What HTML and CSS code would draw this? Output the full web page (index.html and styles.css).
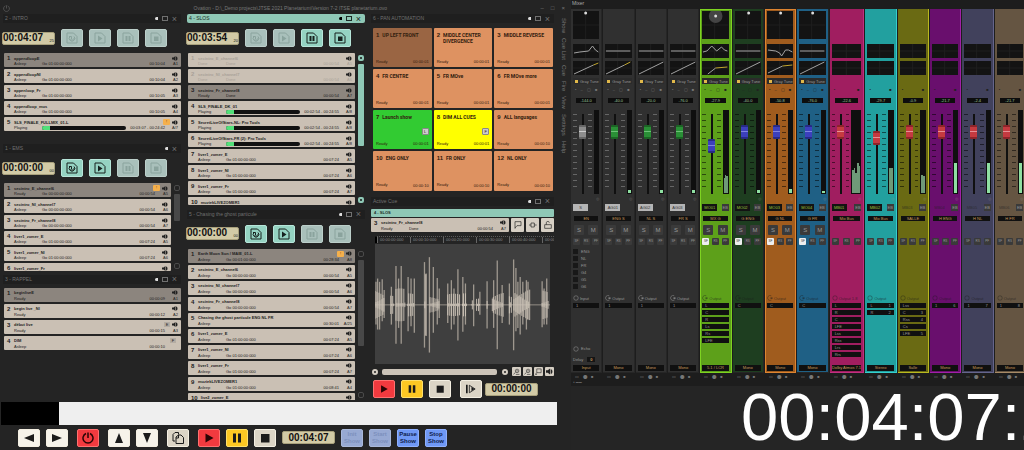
FILE: index.html
```html
<!DOCTYPE html>
<html lang="en">
<head>
    <meta charset="UTF-8">
    <meta name="viewport" content="width=device-width, initial-scale=1.0">
    <title>Ovation</title>
    <link rel="stylesheet" href="styles.css">
</head>
<body>
    <svg class="sprite" aria-hidden="true">
        <symbol id="i-speaker" viewBox="0 0 12 10"><path d="M0 3h3l4-3v10L3 7H0z"/><path d="M8 1c4 0 4 8 0 8z"/></symbol>
        <symbol id="i-doc-loop" viewBox="0 0 24 24"><path class="ln" d="M2 2h13l7 7v13H2z"/><path class="ln" d="M8 9a5.500 5.500 0 1 0 8 0M6 9h5v5M9 14l3 3 5-5"/></symbol>
        <symbol id="i-doc-play" viewBox="0 0 24 24"><path class="ln" d="M2 2h13l7 7v13H2z"/><path d="M8 7l9 6-9 6z"/></symbol>
        <symbol id="i-doc-pause" viewBox="0 0 24 24"><path class="ln" d="M2 2h13l7 7v13H2z"/><path d="M7 8h4v10H7zM13 8h4v10h-4z"/></symbol>
        <symbol id="i-doc-stop" viewBox="0 0 24 24"><path class="ln" d="M2 2h13l7 7v13H2z"/><path d="M8 9h9v9H8z"/></symbol>
        <symbol id="i-left" viewBox="0 0 24 24"><path d="M2 12l20-8v16z"/></symbol>
        <symbol id="i-right" viewBox="0 0 24 24"><path d="M22 12L2 4v16z"/></symbol>
        <symbol id="i-up" viewBox="0 0 24 24"><path d="M12 2l8 20H4z"/></symbol>
        <symbol id="i-down" viewBox="0 0 24 24"><path d="M12 22l8-20H4z"/></symbol>
        <symbol id="i-power" viewBox="0 0 24 24"><path class="ln thick" d="M8 3a10 10 0 1 0 8 0M12 1v11"/></symbol>
        <symbol id="i-copy" viewBox="0 0 24 24"><path class="ln" d="M6 18H2V5l4-4h7v4M8 23V10l5-4h5l5 5v12zM13 6v6H8"/></symbol>
        <symbol id="i-play" viewBox="0 0 24 24"><path d="M5 3l16 9-16 9z"/></symbol>
        <symbol id="i-pause" viewBox="0 0 24 24"><path d="M4 3h6v18H4zM14 3h6v18h-6z"/></symbol>
        <symbol id="i-stop" viewBox="0 0 24 24"><path d="M4 4h17v17H4z"/></symbol>
        <symbol id="i-step" viewBox="0 0 24 24"><path d="M0 2h4v20H0z"/><path class="ln" d="M8 3l14 9-14 9z"/><path d="M13 7l8 5-8 5z"/></symbol>
        <symbol id="i-flag" viewBox="0 0 24 24"><path class="ln" d="M3 23V2h18v12H9l-6 7"/></symbol>
        <symbol id="i-key" viewBox="0 0 24 24"><path class="ln" d="M0 12h6M6 6h10v12H6zM16 12h7"/></symbol>
        <symbol id="i-lock" viewBox="0 0 24 24"><path class="ln" d="M2 11h20v11H2zM7 11V5c0-5 9-5 9 0"/></symbol>
        <symbol id="i-zoom" viewBox="0 0 24 24"><path class="ln" d="M2 22l6-7M20 10a6 6 0 1 1-12 0 6 6 0 1 1 12 0zM11 10h6M10 22h12"/></symbol>
        <symbol id="i-fit" viewBox="0 0 24 24"><path class="ln" d="M6 3h15v13H6zM6 16l-5 6M1 22h6"/></symbol>
        <symbol id="i-ring" viewBox="0 0 24 24"><circle class="ln" cx="12" cy="12" r="9"/></symbol>
        <symbol id="i-knob" viewBox="0 0 24 24"><path class="ln" d="M17 3a10 10 0 1 0 1 17"/><path d="M14 10h8v5h-8z"/></symbol>
    </svg>

    <div class="ovation">
        <header class="titlebar">
            <svg class="titlebar-logo"><use href="#i-power"/></svg>
            <h1 class="titlebar-text">Ovation - D:\_Demo projects\JTSE 2021 Planetarium\Version 7-2 ITSE planetarium.ovo</h1>
            <div class="window-controls">
                <button aria-label="Minimise">–</button>
                <button aria-label="Maximise">□</button>
                <button aria-label="Close">×</button>
            </div>
        </header>

        <main class="workspace">
            <div class="column" id="left"></div>
            <div class="column" id="middle"></div>
            <div class="column column-wide">
                <section class="panel panel-pan">
                    <div class="panel-head">
                        <h2>6 - PAN AUTOMATION</h2>
                        <span class="head-icons"><i class="arrow"></i><i class="box"></i><i class="cross">×</i></span>
                    </div>
                    <div class="tiles" id="tiles"></div>
                </section>
                <section class="panel panel-active">
                    <div class="panel-head">
                        <h2>Active Cue</h2>
                        <span class="head-icons"><i class="arrow"></i><i class="box"></i><i class="cross">×</i></span>
                    </div>
                    <div class="active-list">4 - SLOS</div>
                    <div class="active-cue">
                        <div id="active-row"></div>
                        <button class="tool" aria-label="Marker"><svg><use href="#i-flag"/></svg></button>
                        <button class="tool" aria-label="Key"><svg><use href="#i-key"/></svg></button>
                        <button class="tool" aria-label="Lock"><svg><use href="#i-lock"/></svg></button>
                    </div>
                    <div class="ruler">
                        <span>00:00:00:000</span><span>00:00:10:000</span><span>00:00:20:000</span><span>00:00:30:000</span><span>00:00:40:000</span><span>00:00</span>
                    </div>
                    <svg class="wave" id="wave" viewBox="0 0 534 366" preserveAspectRatio="none"></svg>
                    <div class="wave-scroll">
                        <i class="dot"></i><i class="bar"></i><i class="dot"></i>
                        <button aria-label="Zoom out"><svg><use href="#i-zoom"/></svg></button>
                        <button aria-label="Zoom in"><svg><use href="#i-zoom"/></svg></button>
                        <button aria-label="Fit"><svg><use href="#i-fit"/></svg></button>
                        <button aria-label="Listen"><svg><use href="#i-speaker"/></svg></button>
                    </div>
                    <div class="transport">
                        <button class="btn red" aria-label="Play"><svg><use href="#i-play"/></svg></button>
                        <button class="btn yellow" aria-label="Pause"><svg><use href="#i-pause"/></svg></button>
                        <button class="btn beige" aria-label="Stop"><svg><use href="#i-stop"/></svg></button>
                        <button class="btn beige step" aria-label="Step"><svg><use href="#i-step"/></svg></button>
                        <div class="clock centered">00:00:00</div>
                    </div>
                </section>
            </div>
            <nav class="side-menu">
                <a href="#">Show</a><a href="#">Cue List</a><a href="#">Cue</a><a href="#">Fire</a><a href="#">View</a><a href="#">Settings</a><a href="#">Help</a>
            </nav>
        </main>

        <div class="show-progress"><div class="done"></div></div>

        <footer class="show-bar">
            <button class="btn white" aria-label="Previous"><svg><use href="#i-left"/></svg></button>
            <button class="btn white" aria-label="Next"><svg><use href="#i-right"/></svg></button>
            <button class="btn red apart" aria-label="Power"><svg><use href="#i-power"/></svg></button>
            <button class="btn white apart" aria-label="Up"><svg><use href="#i-up"/></svg></button>
            <button class="btn white" aria-label="Down"><svg><use href="#i-down"/></svg></button>
            <button class="btn beige apart" aria-label="Copy"><svg><use href="#i-copy"/></svg></button>
            <button class="btn red apart" aria-label="Play"><svg><use href="#i-play"/></svg></button>
            <button class="btn yellow" aria-label="Pause"><svg><use href="#i-pause"/></svg></button>
            <button class="btn beige" aria-label="Stop"><svg><use href="#i-stop"/></svg></button>
            <div class="clock centered">00:04:07</div>
            <button class="btn blue" disabled>Init Show</button>
            <button class="btn blue" disabled>Start Show</button>
            <button class="btn blue">Pause Show</button>
            <button class="btn blue">Stop Show</button>
        </footer>
    </div>

    <div class="console">
        <section class="mixer">
            <h2 class="mixer-title">Mixer</h2>
            <div class="strips" id="strips"></div>
            <div class="mixer-foot">● ▬▬</div>
        </section>
        <div class="big-clock">00:04:07:25</div>
    </div>

    <script src="script.js"></script>
</body>
</html>
```

FILE: styles.css
```css
* {
    margin: 0;
    padding: 0;
    box-sizing: border-box;
}

body {
    display: grid;
    grid-template-columns: 571fr 453fr;
    height: 100vh;
    overflow: hidden;
    background: #252525;
    color: #8a8a8a;
    font-family: "Liberation Sans", Arial, sans-serif;
    font-size: 6px;
}

button {
    border: 0;
    background: none;
    color: inherit;
    font: inherit;
}

a {
    color: inherit;
    text-decoration: none;
}

svg {
    display: block;
    fill: currentColor;
}

i {
    font-style: normal;
}

.ln {
    fill: none;
    stroke: currentColor;
    stroke-width: 2;
}

.ln.thick {
    stroke-width: 3;
}

.sprite {
    position: absolute;
    width: 0;
    height: 0;
}

/* Ovation window */
.ovation {
    display: flex;
    flex-direction: column;
    min-width: 0;
    height: 100vh;
    background: #242424;
}

.titlebar {
    display: flex;
    align-items: center;
    flex: none;
    height: 14px;
    padding: 2px 6px 0 3px;
    color: #777;
}

.titlebar-logo {
    width: 7px;
    height: 7px;
    overflow: visible;
    color: #555;
}

.titlebar-text {
    flex: 1;
    padding-left: 30px;
    font-size: 5px;
    font-weight: normal;
    text-align: center;
}

.window-controls {
    display: flex;
    gap: 7px;
    font-size: 6px;
}

.workspace {
    display: flex;
    flex: 1;
    min-height: 0;
}

.column {
    display: flex;
    flex: 184 1 0;
    flex-direction: column;
    min-width: 0;
}

.column-wide {
    flex-grow: 189;
}

.panel {
    display: flex;
    flex-direction: column;
    min-height: 0;
    padding: 0 3px 2px;
    overflow: hidden;
}

.panel-intro { flex: 130 1 0; }
.panel-ems { flex: 130 1 0; }
.panel-rappel { flex: 127 1 0; }
.panel-slos { flex: 196 1 0; }
.panel-chasing { flex: 192 1 0; }
.panel-pan { flex: 182 1 0; }
.panel-active { flex: 205 1 0; }

.panel-head {
    display: flex;
    align-items: center;
    justify-content: space-between;
    flex: none;
    height: 9px;
    padding: 0 4px 0 2px;
    background: #1f1f1f;
    color: #707070;
}

.panel-head h2 {
    font-size: 5px;
    font-weight: normal;
    line-height: 9px;
}

.panel-head.current {
    border-radius: 2px;
    background: #8fc8b6;
    color: #1c2b27;
}

.head-icons {
    display: flex;
    align-items: center;
    gap: 4px;
}

.head-icons .arrow {
    width: 3px;
    height: 3px;
    border-radius: 2px 0 0 2px;
    background: #ddd;
}

.current .arrow {
    background: #000;
}

.head-icons .box {
    width: 6px;
    height: 5px;
    border: 1px solid;
}

.head-icons .cross {
    font-size: 9px;
    line-height: 8px;
}

.panel-tools {
    display: flex;
    align-items: center;
    flex: none;
    gap: 6px;
    height: 18px;
    margin: 6px 0 0 -1px;
}

.clock {
    display: flex;
    justify-content: space-between;
    width: 53px;
    height: 13px;
    border: 1px solid #a8a07c;
    border-radius: 2px;
    background: #d2caa6;
    color: #111;
    font-size: 10px;
    font-weight: bold;
    line-height: 10px;
}

.clock small {
    align-self: end;
    font-size: 4px;
    font-weight: normal;
    line-height: 6px;
}

.clock.centered {
    align-items: center;
    justify-content: center;
}

.cue-btn {
    width: 22px;
    height: 18px;
    padding: 2px 4px;
    border: 1px solid #b7e6da;
    border-radius: 2px;
    background: #95d3c2;
    color: #16201d;
}

.cue-btn:disabled {
    border-color: #bccfca;
    background: #a9c0bb;
    color: #8aa39d;
}

.cue-btn svg {
    width: 12px;
    height: 12px;
}

.panel-body {
    display: flex;
    flex: 0 1 auto;
    gap: 3px;
    min-height: 0;
    margin-top: 6px;
    padding-left: 1px;
}

.panel-rappel .panel-body {
    margin-top: 4px;
}

.cues {
    display: flex;
    flex: 1;
    flex-direction: column;
    gap: 2px;
    min-width: 0;
    overflow: hidden;
    list-style: none;
}

.scroller {
    display: flex;
    flex-direction: column;
    justify-content: space-between;
    gap: 3px;
    width: 7px;
    padding: 2px 0;
    color: #4a4a4a;
}

.scroller button {
    flex: none;
    width: 6px;
    height: 6px;
    border: 1px solid #4a4a4a;
    border-radius: 2px;
}

.scroller .thumb {
    width: 6px;
    border-radius: 1px;
    background: #484848;
}

.scroller .rest {
    flex: 1;
}

.panel-ems .thumb { height: 27px; }
.panel-slos .thumb { height: 82px; background: #8fc8b6; }
.panel-chasing .thumb { height: 86px; }

.panel-slos .scroller button {
    border: 2px solid #8fc8b6;
    background: #33433e;
}

.cue {
    flex: none;
    height: 14px;
    padding: 2px 3px 1px;
    border-radius: 1px;
    background: #cac0b4;
    color: #222;
    font-size: 4px;
}

.cue.brief {
    height: 8px;
}

.cue.selected {
    background: #8c857e;
}

.cue.spent {
    color: #a9a198;
}

.cue.spent svg {
    color: #222;
}

.cue-line {
    display: flex;
    align-items: center;
    height: 6px;
    white-space: nowrap;
}

.cue-line + .cue-line {
    height: 5px;
    padding-left: 7px;
}

.cue-num {
    min-width: 7px;
    padding-right: 3px;
    font-size: 6px;
    font-weight: bold;
    line-height: 6px;
}

.cue-name {
    flex: 1;
    font-weight: bold;
}

.cue svg {
    width: 6px;
    height: 5px;
}

.cue-warn {
    width: 7px;
    height: 6px;
    margin-right: 2px;
    border-radius: 1px;
    background: #f5b04c;
    color: #7d3b00;
    text-align: center;
}

.cue-key {
    width: 6px;
    height: 5px;
    margin-right: 2px;
    background: #b4aca3;
    text-align: center;
}

.cue-state {
    width: 28px;
}

.cue-go {
    flex: 1;
}

.cue-bar {
    flex: 1;
    height: 4px;
    margin-right: 4px;
    border-radius: 2px;
    background: #111;
}

.cue-bar b {
    display: block;
    width: 8px;
    height: 4px;
    border-radius: 2px 0 0 2px;
    background: #52e07a;
}

.cue-out {
    width: 13px;
    text-align: right;
}

/* Pan automation tiles */
.tiles {
    display: grid;
    flex: 1;
    grid-template-columns: repeat(3, 1fr);
    grid-auto-rows: 1fr;
    gap: 2px;
    margin: 5px 1px 4px 2px;
}

.tile {
    display: grid;
    grid-template-columns: auto 1fr auto;
    grid-template-rows: 1fr 6px;
    column-gap: 3px;
    padding: 4px 3px 3px;
    border-radius: 1px;
    background: #de9261;
    color: #33200f;
    font-size: 4px;
    text-align: left;
}

.tile.dimmed { background: #9a6543; }
.tile.green { background: #32cb32; }
.tile.yellow { background: #ffff00; }

.tile b {
    font-size: 6px;
    line-height: 6px;
}

.tile strong {
    grid-column: 2 / 4;
    font-family: Roboto, "Liberation Sans", sans-serif;
    font-size: 5px;
    line-height: 6px;
}

.tile .state {
    grid-column: 1 / 3;
    align-self: center;
}

.tile .length {
    display: flex;
    flex-direction: column;
    align-items: flex-end;
    justify-content: flex-end;
    gap: 6px;
}

.tile .key {
    flex: none;
    width: 7px;
    height: 7px;
    border: 1px solid #888;
    border-radius: 1px;
    background: #ccc;
    line-height: 5px;
    text-align: center;
}

/* Active cue */
.active-list {
    flex: none;
    height: 8px;
    margin-top: 3px;
    padding-left: 3px;
    border-radius: 1px;
    background: #8fc8b6;
    color: #1c2b27;
    font-size: 4px;
    font-weight: bold;
    line-height: 8px;
}

.active-cue {
    display: flex;
    gap: 2px;
    margin-top: 1px;
}

.active-cue > div {
    flex: 1;
}

.tool {
    width: 13px;
    height: 14px;
    border-radius: 1px;
    background: #d6cfc4;
    color: #222;
}

.tool svg {
    width: 8px;
    height: 8px;
    margin: 0 auto;
}

.ruler {
    display: flex;
    flex: none;
    height: 7px;
    margin: 4px 0 1px 4px;
    border-top: 1px dotted #5a5a5a;
    border-left: 2px solid #000;
    color: #8a8a8a;
    font-size: 4px;
    line-height: 6px;
    overflow: hidden;
}

.ruler span {
    flex: none;
    width: 33px;
    padding-left: 2px;
    border-left: 1px solid #666;
}

.ruler span:last-child {
    flex: 1;
}

.wave {
    flex: 1;
    width: auto;
    min-height: 0;
    margin: 0 4px;
    background: #3f3f3f;
    color: #bfb6aa;
}

.wave-scroll {
    display: flex;
    align-items: center;
    flex: none;
    gap: 2px;
    height: 9px;
    margin-top: 3px;
}

.wave-scroll .dot {
    width: 6px;
    height: 6px;
    margin: 0 2px 0 1px;
    border: 2px solid #d6cfc4;
    border-radius: 50%;
    background: #222;
}

.wave-scroll .bar {
    flex: 1;
    height: 6px;
    margin-right: 2px;
    border-radius: 2px;
    background: #cbc3b8;
}

.wave-scroll button {
    width: 9px;
    height: 9px;
    padding: 1px;
    border-radius: 1px;
    background: #d6cfc4;
    color: #222;
}

.wave-scroll svg {
    width: 7px;
    height: 7px;
}

.transport {
    display: flex;
    align-items: center;
    flex: none;
    gap: 6px;
    height: 18px;
    margin: 4px 2px 2px;
}

.transport .step {
    margin-left: 3px;
}

.transport .step + .clock {
    margin-left: -3px;
}

.btn {
    flex: none;
    width: 22px;
    height: 18px;
    border: 1px solid #f4efe2;
    border-radius: 2px;
    color: #1b1b1b;
}

.btn svg {
    width: 10px;
    height: 10px;
    margin: 0 auto;
    overflow: visible;
}

.show-bar .btn svg {
    width: 12px;
    height: 12px;
}

.btn.white { background: #f6f3ea; }
.btn.beige { background: #dcd5c6; }
.btn.yellow { border-color: #ffe06a; background: #fdc823; }

.btn.red {
    border-color: #ff7070;
    background: #f23a3f;
    color: #2a0505;
}

.btn.blue {
    border-color: #8fb0ff;
    background: #6f98f5;
    color: #10204a;
    font-weight: bold;
    line-height: 7px;
}

.btn.blue:disabled {
    border-color: #a9b8da;
    background: #97a9d3;
    color: #7d90bd;
}

.side-menu {
    display: flex;
    align-items: flex-start;
    gap: 5px;
    width: 14px;
    padding-top: 4px;
    color: #777;
    line-height: 14px;
    writing-mode: vertical-rl;
}

.show-progress {
    flex: none;
    height: 23px;
    margin: 0 14px 0 1px;
    background: #efefef;
}

.show-progress .done {
    width: 58px;
    height: 100%;
    background: #000;
}

.show-bar {
    display: flex;
    align-items: center;
    flex: none;
    gap: 6px;
    height: 25px;
    padding-left: 18px;
}

.show-bar .apart {
    margin-left: 3px;
}

/* Mixer */
.console {
    display: flex;
    flex-direction: column;
    min-width: 0;
    height: 100vh;
    overflow: hidden;
}

.mixer {
    flex: none;
    background: #1d1d1d;
}

.mixer-title {
    height: 9px;
    padding-left: 1px;
    color: #aaa;
    font-size: 5px;
    font-weight: normal;
    line-height: 6px;
}

.strips {
    display: flex;
    width: calc(100% + 3px);
}

.channel {
    flex: 9 1 0;
    min-width: 0;
    padding-right: 1px;
}

.channel.wide {
    flex-grow: 10;
}

.strip {
    display: flex;
    flex-direction: column;
    height: 364px;
    padding: 2px 2px 1px;
    border: 1px solid #262626;
    border-width: 0 1px 1px 0;
    background: #303030;
    color: #999;
    font-size: 4px;
    line-height: 5px;
}

.strip.lime {
    padding: 1px 2px 1px 1px;
    border-width: 1px;
    border-color: #7ed321;
    background: #5da01a;
}

.strip.orange {
    padding: 1px 2px 1px 1px;
    border-width: 1px;
    border-color: #dd8430;
    background: #a05c1e;
}

.strip.forest { background: #1e3e20; }
.strip.blue { background: #1f6085; }
.strip.pink { background: #a01e60; border-color: #c03080; }
.strip.teal { background: #22a09f; border-color: #35cfcd; }
.strip.olive { background: #6a6a13; border-color: #b8b820; }
.strip.purple { background: #690f6d; border-color: #a020a8; }
.strip.slate { background: #41415c; border-color: #65658c; }
.strip.tan { background: #655542; border-color: #a78a66; }

.scope {
    flex: none;
    height: 28px;
}

.scope.on,
.graph {
    background: #131313;
}

.scope circle {
    fill: #ddd;
}

.scope circle.halo {
    fill: #444;
}

.scope path,
.graph path {
    fill: none;
    stroke: #202020;
}

.graph {
    flex: none;
    height: 14px;
    margin-top: 5px;
}

.graph + .graph {
    margin-top: 3px;
}

.graph .trace { stroke: #a5a5a5; }
.graph .warm { stroke: #c3a82d; }

.insert {
    display: flex;
    align-items: center;
    flex: none;
    gap: 2px;
    height: 6px;
    margin-top: 3px;
    padding-left: 2px;
    background: #2b2b2b;
    white-space: nowrap;
}

.insert::before {
    content: "";
    width: 3px;
    height: 3px;
    background: #e0b84a;
}

.insert.none {
    visibility: hidden;
}

.marks {
    display: flex;
    justify-content: space-between;
    flex: none;
    height: 5px;
    margin: 3px 2px 0;
    color: #222;
}

.strip.grey .marks {
    color: #777;
}

.value {
    flex: none;
    height: 5px;
    margin: 6px 3px 0;
    background: #0d0d0d;
    color: #9ec49c;
    text-align: center;
}

.fader-area {
    display: flex;
    flex: none;
    gap: 2px;
    height: 84px;
    margin-top: 7px;
}

.scale {
    width: 4px;
    margin: 4px 0 2px;
    background: repeating-linear-gradient(to bottom, #0008 0 1px, transparent 1px 6px);
}

.scale.right {
    margin-left: auto;
}

.grey .scale {
    background: repeating-linear-gradient(to bottom, #666 0 1px, transparent 1px 6px);
}

.fader {
    width: 7px;
    height: 80px;
    margin-top: 4px;
    appearance: none;
    background: linear-gradient(to right, transparent 3px, #101010 3px 5px, transparent 5px);
    direction: rtl;
    writing-mode: vertical-lr;
}

.fader::-webkit-slider-thumb {
    width: 7px;
    height: 14px;
    appearance: none;
    border: 0;
    border-radius: 1px;
    background: linear-gradient(to bottom, var(--dark) 2px, var(--cap) 2px 6px, var(--mid) 6px 7px, var(--cap) 7px 12px, var(--dark) 12px);
}

.cap-grey { --cap: #8d8d8d; --dark: #666; --mid: #ccc; }
.cap-green { --cap: #2a8f36; --dark: #1b6424; --mid: #6cc077; }
.cap-blue { --cap: #3c40bd; --dark: #272a86; --mid: #8084e0; }
.cap-red { --cap: #c53a40; --dark: #8d2429; --mid: #e59095; }

.meter {
    display: flex;
    align-items: flex-end;
    width: 5px;
    padding: 0 1px 1px;
    background: #0f0f0f;
}

.meter.double { width: 6px; }
.meter.surround { width: 12px; }

.meter i {
    flex: 1;
    background: #8fe0a2;
}

.double i,
.surround i {
    background: #6f9a78;
}

.link {
    flex: none;
    height: 4px;
    margin-top: 2px;
    text-align: right;
    opacity: 0.5;
}

.group {
    display: flex;
    align-items: center;
    justify-content: space-between;
    flex: none;
    height: 7px;
    margin-top: 4px;
    line-height: 7px;
}

.group span {
    width: 15px;
    background: #131313;
    color: #9cc33b;
    text-align: center;
}

.group em {
    width: 7px;
    background: #3a3a3a;
    font-style: normal;
    text-align: center;
}

.group .plain {
    background: none;
    color: #222a;
}

.grey .group span {
    background: #b5b5b5;
    color: #333;
}

.grey .group em {
    visibility: hidden;
}

.name,
.format {
    flex: none;
    height: 5px;
    background: #101010;
    color: #c89a5c;
    text-align: center;
    white-space: nowrap;
}

.name {
    margin: 5px 1px 0;
}

.solo-mute,
.minis {
    display: flex;
    justify-content: space-between;
    flex: none;
}

.solo-mute {
    height: 10px;
    margin: 4px 1px 0;
}

.solo-mute button {
    width: 10px;
    border-radius: 1px;
    background: #3a3a3a;
    color: #999;
    font-size: 6px;
}

.solo-mute.none {
    visibility: hidden;
}

.minis {
    height: 7px;
    margin-top: 3px;
}

.minis button {
    width: 7px;
    border-radius: 1px;
    background: #3a3a3a;
    font-size: 3px;
}

.minis .lit {
    background: #eee;
    color: #333;
}

.sends {
    display: flex;
    flex: none;
    flex-direction: column;
    gap: 2px;
    height: 45px;
    margin-top: 4px;
}

.sends label {
    display: flex;
    align-items: center;
    gap: 3px;
    height: 5px;
}

.sends input {
    width: 5px;
    height: 5px;
    appearance: none;
    background: #181818;
}

.route {
    display: flex;
    align-items: center;
    flex: none;
    gap: 1px;
    height: 6px;
    margin-top: 1px;
    white-space: nowrap;
}

.route svg {
    width: 6px;
    height: 6px;
}

.strip:not(.grey) .route {
    color: #1b1b1bb0;
}

.slots {
    display: flex;
    flex: 1;
    flex-direction: column;
    gap: 2px;
    margin-top: 2px;
}

.slots span {
    display: flex;
    justify-content: space-between;
    height: 5px;
    padding: 0 3px;
    background: #101010;
}

.extras {
    flex: none;
    height: 22px;
}

.extras p {
    display: flex;
    align-items: center;
    gap: 2px;
    height: 11px;
}

.extras svg {
    width: 6px;
    height: 6px;
}

.extras b {
    margin-left: 2px;
    padding: 0 3px;
    background: #151515;
    color: #c89a5c;
}

.format {
    height: 6px;
    line-height: 6px;
}

.channel-foot {
    display: flex;
    align-items: center;
    gap: 4px;
    height: 7px;
    padding-left: 4px;
    color: #777;
    font-size: 4px;
}

.mixer-foot {
    height: 6px;
    padding-left: 2px;
    color: #666;
    font-size: 3px;
    line-height: 4px;
}

.big-clock {
    flex: 1;
    padding-left: 170px;
    background: #252525;
    color: #fff;
    font-size: 67px;
    line-height: 62px;
    white-space: nowrap;
}
```

FILE: script.js
```js
const icon = id => `<svg><use href="#${id}"/></svg>`;

// Cue fields: name, state, go time, length, output, options
const GO = 'Go 01:00:00:000';
const GO0 = 'Go 00:00:00:000';

const panels = [
    {
        target: 'left', cls: 'panel-intro', title: '2 - INTRO', clock: '00:04:07', frames: '25', on: [],
        cues: [
            ['appendloopE', 'Asleep', GO, '00:10:04', 'A1', { selected: true }],
            ['appendloopNl', 'Asleep', GO, '00:10:04', 'A2'],
            ['appenloop_Fr', 'Asleep', GO, '00:10:05', 'A3'],
            ['appendloop_mus', 'Asleep', GO, '00:10:05', 'A4'],
            ['SLS_FINALE_FULLMIX_01-L', 'Playing', '', '00:03:07 - 00:24:42', 'A/7', { playing: true, warn: true }]
        ]
    },
    {
        target: 'left', cls: 'panel-ems', title: '1 - EMS', clock: '00:00:00', frames: '00', on: [0, 1], scroll: true, single: true,
        cues: [
            ['secintro_E_channel6', 'Ready', GO0, '00:00:54', 'A5', { selected: true, warn: true }],
            ['secintro_Nl_channel7', 'Asleep', GO0, '00:00:54', 'A6'],
            ['secintro_Fr_channel8', 'Asleep', GO0, '00:00:54', 'A7'],
            ['liver1_zomer_E', 'Asleep', GO, '00:07:24', 'A5'],
            ['liver1_zomer_Nl', 'Asleep', GO, '00:07:24', 'A6'],
            ['liver1_zomer_Fr', '', '', '', '', { brief: true }]
        ]
    },
    {
        target: 'left', cls: 'panel-rappel', title: '3 - RAPPEL',
        cues: [
            ['beginliveE', 'Ready', '', '00:00:09', 'A1', { selected: true }],
            ['begin live _Nl', 'Ready', '', '00:00:12', 'A2'],
            ['début live', 'Ready', '', '00:00:15', 'A3', { key: 'E' }],
            ['DIM', 'Asleep', '', '00:00:10', '', { key: 'F', silent: true }]
        ]
    },
    {
        target: 'middle', cls: 'panel-slos', title: '4 - SLOS', clock: '00:03:54', frames: '20', on: [2, 3], scroll: true, current: true,
        cues: [
            ['secintro_E_channel6', 'Done', 'Done', '00:00:54', 'A5', { spent: true }],
            ['secintro_Nl_channel7', 'Done', 'Done', '00:00:54', 'A6', { spent: true }],
            ['secintro_Fr_channel8', 'Ready', 'Done', '00:00:54', 'A7', { selected: true }],
            ['SLS_FINALE_DK_01', 'Playing', '', '00:02:54 - 00:24:55', 'A/8', { playing: true }],
            ['SecretLiveOfStars-NL: Pro Tools', 'Playing', '', '00:02:54 - 00:24:55', 'A/8', { playing: true }],
            ['SecretLiveOfStars-FR (2): Pro Tools', 'Playing', '', '00:02:54 - 00:24:55', 'A/8', { playing: true }],
            ['liver1_zomer_E', 'Asleep', GO, '00:07:24', 'A5'],
            ['liver1_zomer_Nl', 'Asleep', GO, '00:07:24', 'A6'],
            ['liver1_zomer_Fr', 'Asleep', GO, '00:07:24', 'A7'],
            ['muziekLIVEZOMER1', '', '', '', '', { brief: true }]
        ]
    },
    {
        target: 'middle', cls: 'panel-chasing', title: '5 - Chasing the ghost particule', clock: '00:00:00', frames: '00', on: [0, 1], scroll: true,
        cues: [
            ['Earth Moon Sun / MAIE_01-L', 'Asleep', 'Go 00:01:00:000', '00:28:34', 'A8', { selected: true, warn: true }],
            ['secintro_E_channel6', 'Asleep', GO0, '00:00:54', 'A5'],
            ['secintro_Nl_channel7', 'Asleep', GO0, '00:00:54', 'A6'],
            ['secintro_Fr_channel8', 'Asleep', GO0, '00:00:54', 'A7'],
            ['Chasing the ghost particule ENG NL FR', 'Asleep', '', '00:30:01', 'A/25'],
            ['liver1_zomer_E', 'Asleep', GO, '00:07:24', 'A5'],
            ['liver1_zomer_Nl', 'Asleep', GO, '00:07:24', 'A6'],
            ['liver1_zomer_Fr', 'Asleep', GO, '00:07:24', 'A7'],
            ['muziekLIVEZOMER1', 'Asleep', GO, '00:08:41', 'A4'],
            ['live2_zomer_E', '', '', '', '', { brief: true }]
        ]
    }
];

function cueRow([name, state, go, length, out, opt = {}], num, tag = 'li') {
    const cls = ['selected', 'spent', 'playing', 'brief'].filter(k => opt[k]).join(' ');
    const second = opt.brief ? '' : `<div class="cue-line">
            <span class="cue-state">${state}</span>
            ${opt.playing ? '<span class="cue-bar"><b></b></span>' : `<span class="cue-go">${go}</span>`}
            <span>${length}</span><span class="cue-out">${out}</span>
        </div>`;
    return `<${tag} class="cue ${cls}">
        <div class="cue-line">
            <span class="cue-num">${num}</span><span class="cue-name">${name}</span>
            ${opt.warn ? '<i class="cue-warn">!</i>' : ''}
            ${opt.key ? `<i class="cue-key">${opt.key}</i>` : ''}
            ${opt.silent ? '' : icon('i-speaker')}
        </div>
        ${second}
    </${tag}>`;
}

const cueButtons = [['Loop', 'i-doc-loop'], ['Play', 'i-doc-play'], ['Pause', 'i-doc-pause'], ['Stop', 'i-doc-stop']];

panels.forEach(p => {
    const tools = p.clock ? `<div class="panel-tools">
        <div class="clock">${p.clock}<small>${p.frames}</small></div>
        ${cueButtons.map(([label, id], i) =>
            `<button class="cue-btn" aria-label="${label}" ${p.on.includes(i) ? '' : 'disabled'}>${icon(id)}</button>`).join('')}
    </div>` : '';
    const scroller = p.scroll ? `<div class="scroller">
        <button aria-label="Scroll up"></button><div class="thumb"></div><div class="rest"></div><button aria-label="Scroll down"></button>
    </div>` : '';

    document.getElementById(p.target).insertAdjacentHTML('beforeend', `<section class="panel ${p.cls}">
        <div class="panel-head ${p.current ? 'current' : ''}">
            <h2>${p.title}</h2>
            <span class="head-icons"><i class="arrow"></i>${p.single ? '' : '<i class="box"></i>'}<i class="cross">×</i></span>
        </div>
        ${tools}
        <div class="panel-body">
            <ol class="cues">${p.cues.map((c, i) => cueRow(c, i + 1)).join('')}</ol>
            ${scroller}
        </div>
    </section>`);
});

document.getElementById('active-row').innerHTML =
    cueRow(['secintro_Fr_channel8', 'Ready', 'Done', '00:00:54', 'A7'], 3, 'div');

// Pan automation
const tiles = [
    ['UP LEFT FRONT', '00:00:01', 'dimmed'], ['MIDDLE CENTER DIVERGENCE', '00:00:01'], ['MIDDLE REVERSE', '00:00:01'],
    ['FR CENTRE', '00:00:01'], ['FR MOve', '00:00:01'], ['FR MOve more', '00:00:01'],
    ['Launch show', '00:00:01', 'green', 'L'], ['DIM ALL CUES', '00:00:01', 'yellow', 'F'], ['ALL languages', '00:00:10'],
    ['ENG ONLY', '00:00:10'], ['FR ONLY', '00:00:10'], ['NL ONLY', '00:00:10']
];

document.getElementById('tiles').innerHTML = tiles.map(([name, length, cls = '', key], i) =>
    `<button class="tile ${cls}"><b>${i + 1}</b><strong>${name}</strong><span class="state">Ready</span>
    <span class="length">${key ? `<i class="key">${key}</i>` : ''}<span>${length}</span></span></button>`).join('');

// Waveform: [x, height above the axis, height below]
const axis = 185;
const peaks = [
    [3, 70, 60], [8, 80, 75], [14, 70, 75], [22, 78, 50], [28, 45, 40], [50, 55, 60], [64, 118, 118], [72, 80, 70],
    [80, 118, 118], [101, 85, 80], [110, 80, 65], [120, 80, 85], [151, 130, 130], [156, 95, 95], [166, 145, 145],
    [178, 115, 85], [190, 82, 60], [196, 50, 40], [222, 65, 55], [233, 75, 75], [241, 50, 60], [253, 108, 108],
    [268, 85, 82], [276, 65, 60], [301, 62, 65], [320, 40, 30], [342, 72, 72], [362, 75, 70], [373, 135, 135],
    [388, 60, 55], [410, 65, 60], [423, 138, 138], [430, 112, 80], [436, 70, 70], [443, 85, 90], [451, 70, 60],
    [462, 75, 75], [467, 70, 45], [510, 72, 68], [516, 50, 60], [524, 80, 60]
];
const bursts = [
    [0, 30, 45], [48, 58, 28], [64, 92, 50], [100, 120, 35], [152, 158, 95], [168, 198, 25], [222, 260, 34],
    [267, 282, 35], [294, 302, 14], [310, 322, 20], [342, 346, 12], [358, 392, 38], [410, 418, 30],
    [424, 474, 50], [510, 530, 45]
];

let wave = `<path d="M0 ${axis}H534" stroke="currentColor" stroke-width="2"/>`;
peaks.forEach(([x, up, down]) => {
    wave += `<path d="M${x} ${axis - up}V${axis + down}" stroke="currentColor" stroke-width="4" opacity=".75"/>`;
});
bursts.forEach(([from, to, amp]) => {
    for (let x = from; x < to; x += 3) {
        const h = amp * (0.55 + 0.45 * Math.sin(x * 7.3 + amp));
        wave += `<path d="M${x} ${axis - h}V${axis + h}" stroke="#d0c7bb" stroke-width="3" opacity=".9"/>`;
    }
});
document.getElementById('wave').innerHTML = wave;

// Mixer
const FLAT = 'M1 7H26';
const LINE = 'M1 13L26 1';
const channels = [
    { name: 'EN', level: '-144.0', color: 'grey', cap: 'grey', pos: 84, eq: 'M1 9l6-1 9-1 4-5 3 4 3 2', dyn: 'M1 13L21 4', warm: 'M21 4l5-2', pan: [13, 2], group: 'S', slots: ['1'], format: 'Input', meter: [0], sends: true },
    { name: 'ENG S', level: '-40.0', color: 'grey', cap: 'green', pos: 84, eq: FLAT, dyn: 'M1 13L20 4', warm: 'M20 4l6-3', group: 'AG01', slots: ['1'], format: 'Mono', meter: [4] },
    { name: 'NL S', level: '-20.0', color: 'grey', cap: 'green', pos: 84, eq: FLAT, dyn: LINE, group: 'AG02', slots: ['1'], format: 'Mono', meter: [4] },
    { name: 'FR S', level: '-76.0', color: 'grey', cap: 'green', pos: 84, eq: FLAT, dyn: LINE, group: 'AG03', slots: ['1'], format: 'Mono', meter: [4] },
    { name: 'MX G', level: '-27.9', color: 'lime', cap: 'blue', pos: 62, eq: 'M1 8l4-1 5-5 5 5 5-4 3 3 3 1', dyn: 'M6 13l8-6', warm: 'M14 7l12-1', pan: [14, 5], halo: true, group: 'MO01', slots: ['L', 'C', 'R', 'Ls', 'Rs', 'LFE'], format: '5.1 / LCR', meter: [18, 22, 20], lit: true },
    { name: 'G ENG', level: '-40.0', color: 'forest', cap: 'blue', pos: 84, eq: FLAT, dyn: LINE, pan: [14, 2], group: 'MO02', slots: ['C'], format: 'Mono', meter: [4], lit: true },
    { name: 'G NL', level: '-50.8', color: 'orange', cap: 'blue', pos: 84, eq: 'M1 6l8 1 4 2 2 3 4-6 3 0 4 2', dyn: 'M1 12l15-7', warm: 'M16 5l10-1', pan: [14, 2], group: 'MO03', slots: ['C'], format: 'Mono', meter: [5], lit: true },
    { name: 'G FR', level: '-76.0', color: 'blue', cap: 'blue', pos: 84, eq: FLAT, dyn: LINE, pan: [14, 2], group: 'MO04', slots: ['C'], format: 'Mono', meter: [3], lit: true },
    { name: 'Mix Bus', level: '-22.6', color: 'pink', cap: 'red', pos: 84, bus: true, group: 'MB01', out: 'Output 1-8', slots: ['L', 'R', 'C', 'LFE', 'Lss', 'Rss', 'Lrs', 'Rrs'], format: 'Dolby Atmos 7.1', meter: [28, 30, 24, 36, 32], wide: true },
    { name: 'Mix Bus', level: '-29.7', color: 'teal', cap: 'red', pos: 75, bus: true, group: 'MB02', slots: ['L 1', 'R 2'], format: 'Stereo', meter: [30, 30] },
    { name: 'SALLE', level: '-0.9', color: 'olive', cap: 'red', pos: 84, bus: true, group: 'MB03', plain: true, slots: ['Lss', 'C 3', 'Rss 4', 'Cs', 'LFE 5'], format: 'Salle', meter: [22, 20] },
    { name: 'H ENG', level: '-21.7', color: 'purple', cap: 'red', pos: 84, bus: true, group: 'MB04', plain: true, slots: ['1 6'], format: 'Mono', meter: [36] },
    { name: 'H NL', level: '-2.4', color: 'slate', cap: 'red', pos: 84, bus: true, group: 'MB05', plain: true, slots: ['1 7'], format: 'Mono', meter: [36] },
    { name: 'H FR', level: '-21.7', color: 'tan', cap: 'red', pos: 84, bus: true, group: 'MB06', plain: true, slots: ['1 8'], format: 'Mono', meter: [36] }
];

function scope(c) {
    if (!c.pan) return '<div class="scope"></div>';
    const [x, y] = c.pan;
    return `<svg class="scope on" viewBox="0 0 27 28" preserveAspectRatio="none"><path d="M0 14H27M13 0V28"/>
        ${c.halo ? `<circle class="halo" cx="${x}" cy="${y}" r="7"/>` : ''}<circle cx="${x}" cy="${y}" r="1.5"/></svg>`;
}

function graph(trace, warm) {
    return `<svg class="graph" viewBox="0 0 27 14" preserveAspectRatio="none"><path d="M0 7H27M13 0V14"/>
        ${trace ? `<path class="trace" d="${trace}"/>` : ''}${warm ? `<path class="warm" d="${warm}"/>` : ''}</svg>`;
}

document.getElementById('strips').innerHTML = channels.map(c => {
    const meterCls = c.meter.length > 3 ? 'surround' : c.meter.length > 1 ? 'double' : '';
    const slots = c.slots.map(s => `<span>${s.split(' ').map(t => `<i>${t}</i>`).join('')}</span>`).join('');
    const sends = c.sends ? ['ENG', 'NL', 'FR', 'G4', 'G5', 'G6'].map(s => `<label><input type="checkbox">${s}</label>`).join('') : '';
    return `<div class="channel ${c.wide ? 'wide' : ''}">
        <div class="strip ${c.color}">
            ${scope(c)}${graph(c.eq)}${graph(c.dyn, c.warm)}
            <div class="insert ${c.bus ? 'none' : ''}">${c.bus ? '' : 'Gray Tune'}</div>
            <div class="marks"><i>•</i>${c.bus ? '' : '<i>–</i><i>▢</i>'}<i>■</i></div>
            <div class="value">${c.level}</div>
            <div class="fader-area">
                <div class="scale"></div>
                <input class="fader cap-${c.cap}" type="range" min="0" max="100" value="${c.pos}" aria-label="${c.name} level">
                <div class="scale right"></div>
                <div class="meter ${meterCls}">${c.meter.map(m => `<i style="height:${m}%"></i>`).join('')}</div>
            </div>
            <div class="link">◎</div>
            <div class="group"><span class="${c.plain ? 'plain' : ''}">${c.group}</span><em>EB</em></div>
            <div class="name">${c.name}</div>
            <div class="solo-mute ${c.bus ? 'none' : ''}"><button>S</button><button>M</button></div>
            <div class="minis"><button class="${c.lit ? 'lit' : ''}">SF</button><button>RS</button><button>PF</button></div>
            <div class="sends">${sends}</div>
            <div class="route">${c.sends ? icon('i-ring') + 'Input' : icon(c.bus ? 'i-ring' : 'i-knob') + (c.out || 'Output')}</div>
            <div class="slots">${slots}</div>
            ${c.sends ? `<div class="extras"><p>${icon('i-ring')}Echo</p><p>Delay <b>0</b></p></div>` : ''}
            <div class="format">${c.format}</div>
        </div>
        <div class="channel-foot"><i>▭</i><i>⬤</i><i>■</i></div>
    </div>`;
}).join('');
```
